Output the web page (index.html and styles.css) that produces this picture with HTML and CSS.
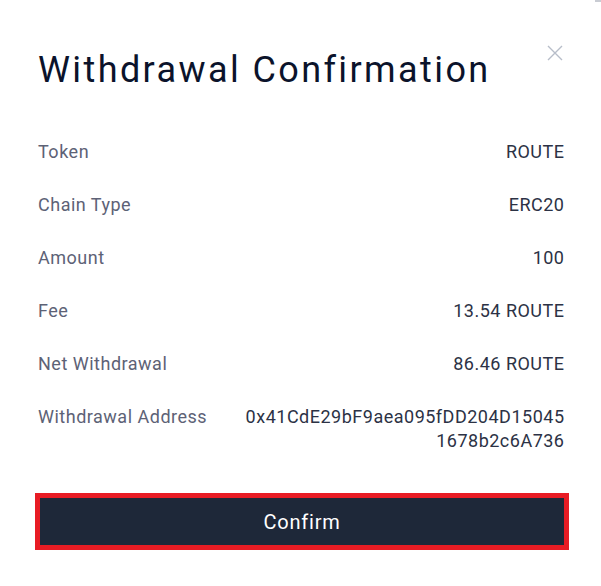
FILE: index.html
```html
<!DOCTYPE html>
<html lang="en">
<head>
<meta charset="utf-8">
<title>Withdrawal Confirmation</title>
<link rel="stylesheet" href="styles.css">
</head>
<body>
<div class="scroll-edge"></div>
<div class="dialog">
  <button class="close" aria-label="Close">
    <svg width="16" height="16" viewBox="0 0 16 16"><path d="M1 1L15 15M15 1L1 15" stroke="#b7bdc9" stroke-width="1.4" fill="none"/></svg>
  </button>
  <h1 class="title">Withdrawal Confirmation</h1>
  <div class="rows">
    <div class="row"><span class="label">Token</span><span class="value">ROUTE</span></div>
    <div class="row"><span class="label">Chain Type</span><span class="value">ERC20</span></div>
    <div class="row"><span class="label">Amount</span><span class="value">100</span></div>
    <div class="row"><span class="label">Fee</span><span class="value">13.54 ROUTE</span></div>
    <div class="row"><span class="label">Net Withdrawal</span><span class="value">86.46 ROUTE</span></div>
    <div class="row"><span class="label">Withdrawal Address</span><span class="value address">0x41CdE29bF9aea095fDD204D15045<br>1678b2c6A736</span></div>
  </div>
  <div class="actions">
    <button class="confirm">Confirm</button>
  </div>
</div>
</body>
</html>
```

FILE: styles.css
```css
* { box-sizing: border-box; }
html, body { margin: 0; padding: 0; background: #ffffff; }
body { font-family: Roboto, "Noto Sans", sans-serif; }

.scroll-edge {
  position: absolute;
  top: 0;
  right: 0;
  width: 6px;
  height: 2px;
  background: #c9ccd3;
}

.dialog {
  position: relative;
  padding: 49px 37px 0 38px;
  width: 601px;
}

.close {
  position: absolute;
  left: 547px;
  top: 45px;
  width: 16px;
  height: 16px;
  padding: 0;
  border: 0;
  background: none;
  display: block;
}
.close svg { display: block; }

.title {
  margin: 0;
  font-size: 36px;
  line-height: 42px;
  font-weight: 400;
  letter-spacing: 2.4px;
  color: #0b132b;
}

.rows {
  margin-top: 49px;
  display: flex;
  flex-direction: column;
  gap: 29px;
}

.row {
  display: flex;
  justify-content: space-between;
  align-items: flex-start;
  font-size: 18px;
  line-height: 24px;
  letter-spacing: 0.5px;
}

.label { color: #5d6276; }
.value { color: #2c3245; text-align: right; margin-right: -0.5px; }

.actions {
  margin-top: 40px;
  margin-left: -3px;
}

.confirm {
  display: block;
  width: 534px;
  height: 57px;
  border: 5px solid #e81c24;
  background: #1e2839;
  color: #ffffff;
  font-family: Roboto, "Noto Sans", sans-serif;
  font-size: 20px;
  font-weight: 400;
  letter-spacing: 0.8px;
  padding: 0;
}
```
